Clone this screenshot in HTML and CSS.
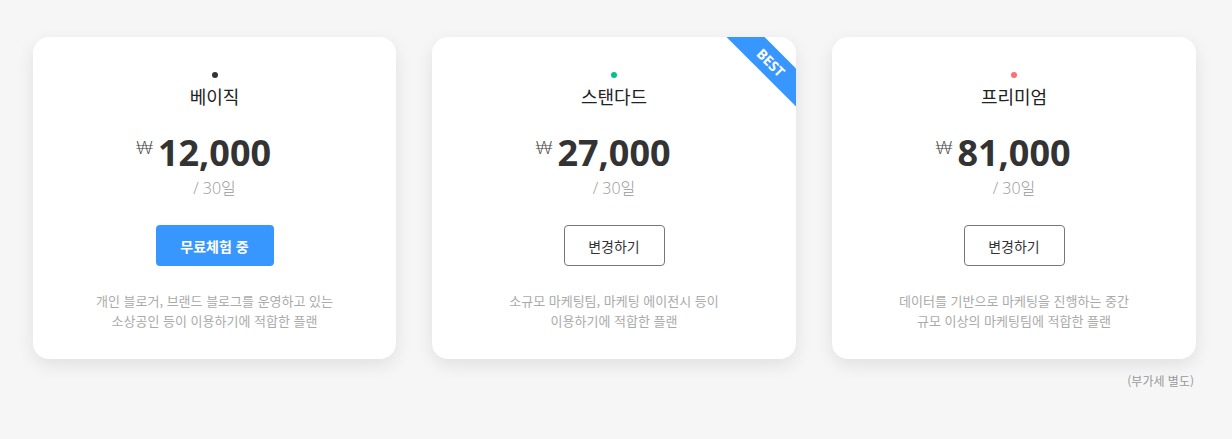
FILE: index.html
```html
<!DOCTYPE html>
<html lang="ko">
<head>
<meta charset="utf-8">
<link rel="stylesheet" href="styles.css">
</head>
<body>
<main class="pricing">
  <div class="plans">
    <section class="card">
      <span class="dot dot-basic"></span>
      <h2 class="name">베이직</h2>
      <div class="price"><span class="amount"><span class="won">₩</span>12,000</span></div>
      <div class="period">/ 30일</div>
      <button class="btn btn-primary">무료체험 중</button>
      <p class="desc">개인 블로거, 브랜드 블로그를 운영하고 있는<br>소상공인 등이 이용하기에 적합한 플랜</p>
    </section>
    <section class="card">
      <div class="ribbon">BEST</div>
      <span class="dot dot-standard"></span>
      <h2 class="name">스탠다드</h2>
      <div class="price"><span class="amount"><span class="won">₩</span>27,000</span></div>
      <div class="period">/ 30일</div>
      <button class="btn btn-outline">변경하기</button>
      <p class="desc">소규모 마케팅팀, 마케팅 에이전시 등이<br>이용하기에 적합한 플랜</p>
    </section>
    <section class="card">
      <span class="dot dot-premium"></span>
      <h2 class="name">프리미엄</h2>
      <div class="price"><span class="amount"><span class="won">₩</span>81,000</span></div>
      <div class="period">/ 30일</div>
      <button class="btn btn-outline">변경하기</button>
      <p class="desc">데이터를 기반으로 마케팅을 진행하는 중간<br>규모 이상의 마케팅팀에 적합한 플랜</p>
    </section>
  </div>
  <p class="vat">(부가세 별도)</p>
</main>
</body>
</html>
```
FILE: styles.css
```css
* { box-sizing: border-box; }
html, body { margin: 0; padding: 0; }
body {
  background: #f6f6f6;
  font-family: "Noto Sans CJK KR", "Noto Sans", sans-serif;
  color: #333;
  width: 1232px;
  height: 439px;
  overflow: hidden;
}
.pricing {
  padding: 37px 36px 0 33px;
}
.plans {
  display: grid;
  grid-template-columns: 363px 364px 364px;
  gap: 36px;
}
.card {
  position: relative;
  overflow: hidden;
  background: #fff;
  border-radius: 16px;
  box-shadow: 0 6px 18px rgba(0, 0, 0, 0.09);
  height: 322px;
  padding-top: 35px;
  display: flex;
  flex-direction: column;
  align-items: center;
  text-align: center;
}
.dot {
  display: block;
  width: 6px;
  height: 6px;
  border-radius: 50%;
}
.dot-basic { background: #333; }
.dot-standard { background: #00c389; }
.dot-premium { background: #ff6f6f; }
.name {
  margin: 5px 0 0;
  font-size: 18px;
  line-height: 26px;
  font-weight: 400;
  color: #222;
}
.price {
  margin-top: 22px;
  height: 44px;
  font-family: "Open Sans", "Noto Sans CJK KR", sans-serif;
}
.amount {
  position: relative;
  display: inline-block;
  font-size: 36px;
  line-height: 44px;
  font-weight: 700;
  color: #333;
}
.won {
  position: absolute;
  right: 100%;
  top: 6px;
  margin-right: 4px;
  font-family: "Lato", sans-serif;
  font-size: 18px;
  line-height: 20px;
  font-weight: 300;
  color: #444;
}
.period {
  margin-top: 1px;
  font-size: 16px;
  line-height: 24px;
  color: #999;
  font-family: "Open Sans", "Noto Sans CJK KR", sans-serif;
  font-weight: 300;
}
.btn {
  margin-top: 25px;
  height: 41px;
  border-radius: 4px;
  font-family: "Noto Sans CJK KR", sans-serif;
  font-size: 14px;
  cursor: pointer;
}
.btn-primary {
  width: 118px;
  background: #3897fe;
  border: none;
  color: #fff;
  font-weight: 700;
}
.btn-outline {
  width: 101px;
  background: #fff;
  border: 1px solid #777;
  color: #333;
}
.desc {
  margin: 25px 0 0;
  font-size: 13px;
  line-height: 20px;
  color: #aaa;
}
.ribbon {
  position: absolute;
  top: 12px;
  right: -35px;
  width: 120px;
  height: 27px;
  line-height: 27px;
  background: #3897fe;
  color: #fff;
  font-family: "Open Sans", sans-serif;
  font-weight: 700;
  font-size: 14px;
  text-align: center;
  transform: rotate(45deg);
}
.vat {
  margin: 13px 2px 0 0;
  text-align: right;
  font-size: 12px;
  line-height: 18px;
  color: #999;
}
```
